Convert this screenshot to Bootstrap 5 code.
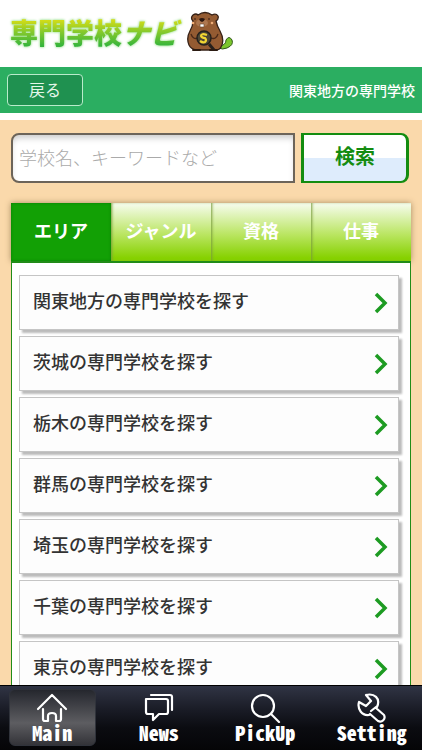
<!DOCTYPE html>
<html lang="ja">
<head>
<meta charset="utf-8">
<meta name="viewport" content="width=device-width, initial-scale=1">
<title>専門学校ナビ</title>
<link href="https://cdn.jsdelivr.net/npm/bootstrap@5.3.0/dist/css/bootstrap.min.css" rel="stylesheet">
<style>
body{font-family:"Noto Sans CJK JP",sans-serif;background:#fff}
.site-main{background:#fad9ab;min-height:0;margin-top:7px;scrollbar-width:none;padding:13px 11px 0}
.site-main::-webkit-scrollbar{display:none}
.site-head{height:67px;padding:0 10px 4px;gap:4px}
.logo-type{filter:drop-shadow(0 0 1px #a9e39d) drop-shadow(0 0 1px #c4efbd)}
.logo-type span{font-weight:900;font-size:28px;line-height:40px;background:linear-gradient(#d4dd18 20%,#85c92c 50%,#35b43c 85%);-webkit-background-clip:text;background-clip:text;color:transparent}
.logo-type .logo-navi{font-style:italic;padding-right:4px}
.title-bar{height:46px;background:#2bae61;padding:0 7px}
.title-bar h1{font-size:14px;font-weight:500}
.back-btn{width:76px;height:32px;font-size:16px;line-height:16px;color:#e3f6e9;background:#1f9150;border:1px solid #b9ebcb;border-radius:4px;padding:0 0 3px}
.back-btn:hover{background:#187a42;color:#fff}
.search-row{gap:6px;padding-right:2px}
.search-box{height:50px;font-size:18px;padding:0 6px 2px;border:2px solid #6c6459;border-radius:8px 0 0 8px;box-shadow:inset 0 5px 6px -2px #ccc}
.search-box::placeholder{color:#aaa;font-weight:300}
.search-btn{width:108px;height:50px;padding:0 0 4px;font-size:20px;line-height:20px;font-weight:700;color:#148c10;border:2px solid #148c10;border-width:2px 3px;border-radius:0 8px 8px 0;background:linear-gradient(#fff 50%,#deecfc 50%)}
.search-btn:hover{color:#0b6a08;border-color:#0b6a08}
.tab-strip{margin-top:20px;box-shadow:0 0 6px #a88c61}
.tab-strip .nav-link{height:58px;padding:0 0 4px;border:0;font-size:18px;line-height:54px;font-weight:700;color:#fff;border-radius:0;background:linear-gradient(#f7fcef,#b9e560 55%,#86d100 95%)}
.tab-strip .nav-item+.nav-item .nav-link{box-shadow:inset 2px 0 3px -1px #799d3b}
.tab-strip .nav-item .nav-link.active{background:#12a005;box-shadow:inset 0 0 3px #087c06}
.panel-area{border:1px solid #218c18;border-top-width:2px;padding:12px 11px 8px 7px;gap:6px}
.area-link{height:55px;padding:0 10px 0 13px;font-size:18px;font-weight:500;color:#333;background:#fdfdfd;border:1px solid #c5c5c5;box-shadow:3px 3px 2px #bbb}
.area-link span{padding-bottom:4px}
.area-link:hover{background:#eef8e7}
.tab-bar{height:65px;background:linear-gradient(#303444,#191b25 38%,#0b0c11 65%,#050507);border-top:1px solid #000;padding:3px 7px 4px 9px;gap:20px}
.tab-bar a{width:88px;color:#fff;border-radius:6px;border:1px solid transparent;font-size:20px;line-height:20px;font-weight:900;font-feature-settings:"hwid"}
.tab-bar a.active{background:linear-gradient(#25272e,#5d5d61 60%,#333338);border-color:#30333b}
.tab-bar svg{margin-top:3px}
</style>
</head>
<body>
<div class="vh-100 d-flex flex-column overflow-hidden">
<header class="flex-shrink-0">
 <div class="site-head d-flex align-items-center">
  <a href="#" class="logo-type text-decoration-none d-flex align-items-center"><span>専門学校</span><span class="logo-navi">ナビ</span></a>
  <svg width="48" height="42" viewBox="0 0 48 42" aria-hidden="true">
   <path d="M34 35Q40 34 40 29Q43 24 46 29Q48 34 41 37Q36 39 33 37Z" fill="#7bc62c" stroke="#31571b"/>
   <path d="M7 10Q4 7 7 4Q10 2 12 4Q19-1 26 4Q30 2 32 5Q33 8 30 10Q31 15 34 20Q39 29 35 36Q34 39 29 39H10Q5 38 3 34Q0 27 4 20Q7 15 7 10Z" fill="#945b32" stroke="#352016" stroke-width="1.3"/>
   <ellipse cx="16" cy="12" rx="6" ry="4" fill="#ad7750"/>
   <path d="M13 8Q16 6 19 8Q18 11 16 11Q14 11 13 8Z" fill="#2b1710"/>
   <path d="M14 13h4v3h-4z" fill="#fff" stroke="#60402a" stroke-width=".6"/>
   <circle cx="9" cy="8" r=".8" fill="#211"/><circle cx="23" cy="8" r=".8" fill="#211"/>
   <circle cx="7" cy="12" r="1.300" fill="#efad78"/><circle cx="26" cy="12" r="1.300" fill="#efad78"/>
   <path d="M5 23Q7 29 12 27M32 23Q30 29 25 27" fill="none" stroke="#4a2918" stroke-width="1.300"/>
   <path d="M23 33l5 6" stroke="#26201c" stroke-width="3"/>
   <circle cx="18" cy="27" r="7" fill="#4d4736" stroke="#24211d" stroke-width="1.500"/>
   <path d="M21 24Q15 22 15 25Q16 27 19 27Q21 29 19 31Q17 32 14 30" fill="none" stroke="#f1d633" stroke-width="2.200"/>
   <path d="M7 39h7m10 0h7" stroke="#2b1b12" stroke-width="2" stroke-linecap="round"/>
  </svg>
 </div>
 <div class="title-bar d-flex align-items-center justify-content-between">
  <button type="button" class="btn back-btn">戻る</button>
  <h1 class="text-white m-0">関東地方の専門学校</h1>
 </div>
</header>
<main class="site-main flex-grow-1 overflow-auto">
 <form class="search-row d-flex" role="search">
  <input id="keyword" type="search" class="form-control search-box flex-grow-1" placeholder="学校名、キーワードなど" aria-label="学校名、キーワードなど">
  <button type="button" class="btn search-btn flex-shrink-0">検索</button>
 </form>
 <ul class="nav nav-justified tab-strip" role="tablist">
  <li class="nav-item" role="presentation"><button class="nav-link active" type="button" role="tab" aria-selected="true">エリア</button></li>
  <li class="nav-item" role="presentation"><button class="nav-link" type="button" role="tab" aria-selected="false">ジャンル</button></li>
  <li class="nav-item" role="presentation"><button class="nav-link" type="button" role="tab" aria-selected="false">資格</button></li>
  <li class="nav-item" role="presentation"><button class="nav-link" type="button" role="tab" aria-selected="false">仕事</button></li>
 </ul>
 <svg class="d-none"><symbol id="chev" viewBox="0 0 14 22"><path d="M2 2L11 11L2 20" fill="none" stroke="#1d9b22" stroke-width="3.500"/></symbol></svg>
 <nav class="panel-area bg-white d-flex flex-column" aria-label="エリア">
  <a href="#" class="area-link d-flex align-items-center justify-content-between text-decoration-none"><span>関東地方の専門学校を探す</span><svg width="14" height="22"><use href="#chev"/></svg></a>
  <a href="#" class="area-link d-flex align-items-center justify-content-between text-decoration-none"><span>茨城の専門学校を探す</span><svg width="14" height="22"><use href="#chev"/></svg></a>
  <a href="#" class="area-link d-flex align-items-center justify-content-between text-decoration-none"><span>栃木の専門学校を探す</span><svg width="14" height="22"><use href="#chev"/></svg></a>
  <a href="#" class="area-link d-flex align-items-center justify-content-between text-decoration-none"><span>群馬の専門学校を探す</span><svg width="14" height="22"><use href="#chev"/></svg></a>
  <a href="#" class="area-link d-flex align-items-center justify-content-between text-decoration-none"><span>埼玉の専門学校を探す</span><svg width="14" height="22"><use href="#chev"/></svg></a>
  <a href="#" class="area-link d-flex align-items-center justify-content-between text-decoration-none"><span>千葉の専門学校を探す</span><svg width="14" height="22"><use href="#chev"/></svg></a>
  <a href="#" class="area-link d-flex align-items-center justify-content-between text-decoration-none"><span>東京の専門学校を探す</span><svg width="14" height="22"><use href="#chev"/></svg></a>
 </nav>
</main>
<nav class="tab-bar d-flex justify-content-between flex-shrink-0" aria-label="メイン">
 <a href="#" class="active d-flex flex-column align-items-center text-decoration-none" aria-current="page"><svg width="32" height="30" viewBox="0 0 32 30" fill="none" stroke="#fff" stroke-width="2.200" stroke-linecap="round" stroke-linejoin="round" aria-hidden="true"><path d="M2 16L16 2L30 16M7 16V26Q7 28 9 28H12V23Q12 20 16 20Q20 20 20 23V28H23Q25 28 25 26V16"/></svg>Main</a>
 <a href="#" class="d-flex flex-column align-items-center text-decoration-none"><svg width="32" height="30" viewBox="0 0 32 30" fill="none" stroke="#fff" stroke-width="2.200" stroke-linecap="round" stroke-linejoin="round" aria-hidden="true"><path d="M3 6H23Q25 6 25 8V19Q25 21 23 21H16L10 27V21H5Q3 21 3 19V6ZM8 2H27Q29 2 29 4V17"/></svg>News</a>
 <a href="#" class="d-flex flex-column align-items-center text-decoration-none"><svg width="32" height="30" viewBox="0 0 32 30" fill="none" stroke="#fff" stroke-width="2.200" stroke-linecap="round" aria-hidden="true"><circle cx="14" cy="13" r="11"/><path d="M22 21L30 29"/></svg>PickUp</a>
 <a href="#" class="d-flex flex-column align-items-center text-decoration-none"><svg width="32" height="30" viewBox="0 0 32 30" fill="none" stroke="#fff" stroke-width="2.200" stroke-linecap="round" stroke-linejoin="round" aria-hidden="true"><path d="M10 2L15 8L10 13L3 9C1 16 6 23 13 22L14 21L22 28C26 30 30 26 28 22L20 15M21 14C25 5 18 0 10 2M15 18L20 14"/></svg>Setting</a>
</nav>
</div>
<script src="https://cdn.jsdelivr.net/npm/bootstrap@5.3.0/dist/js/bootstrap.bundle.min.js"></script>
</body>
</html>
